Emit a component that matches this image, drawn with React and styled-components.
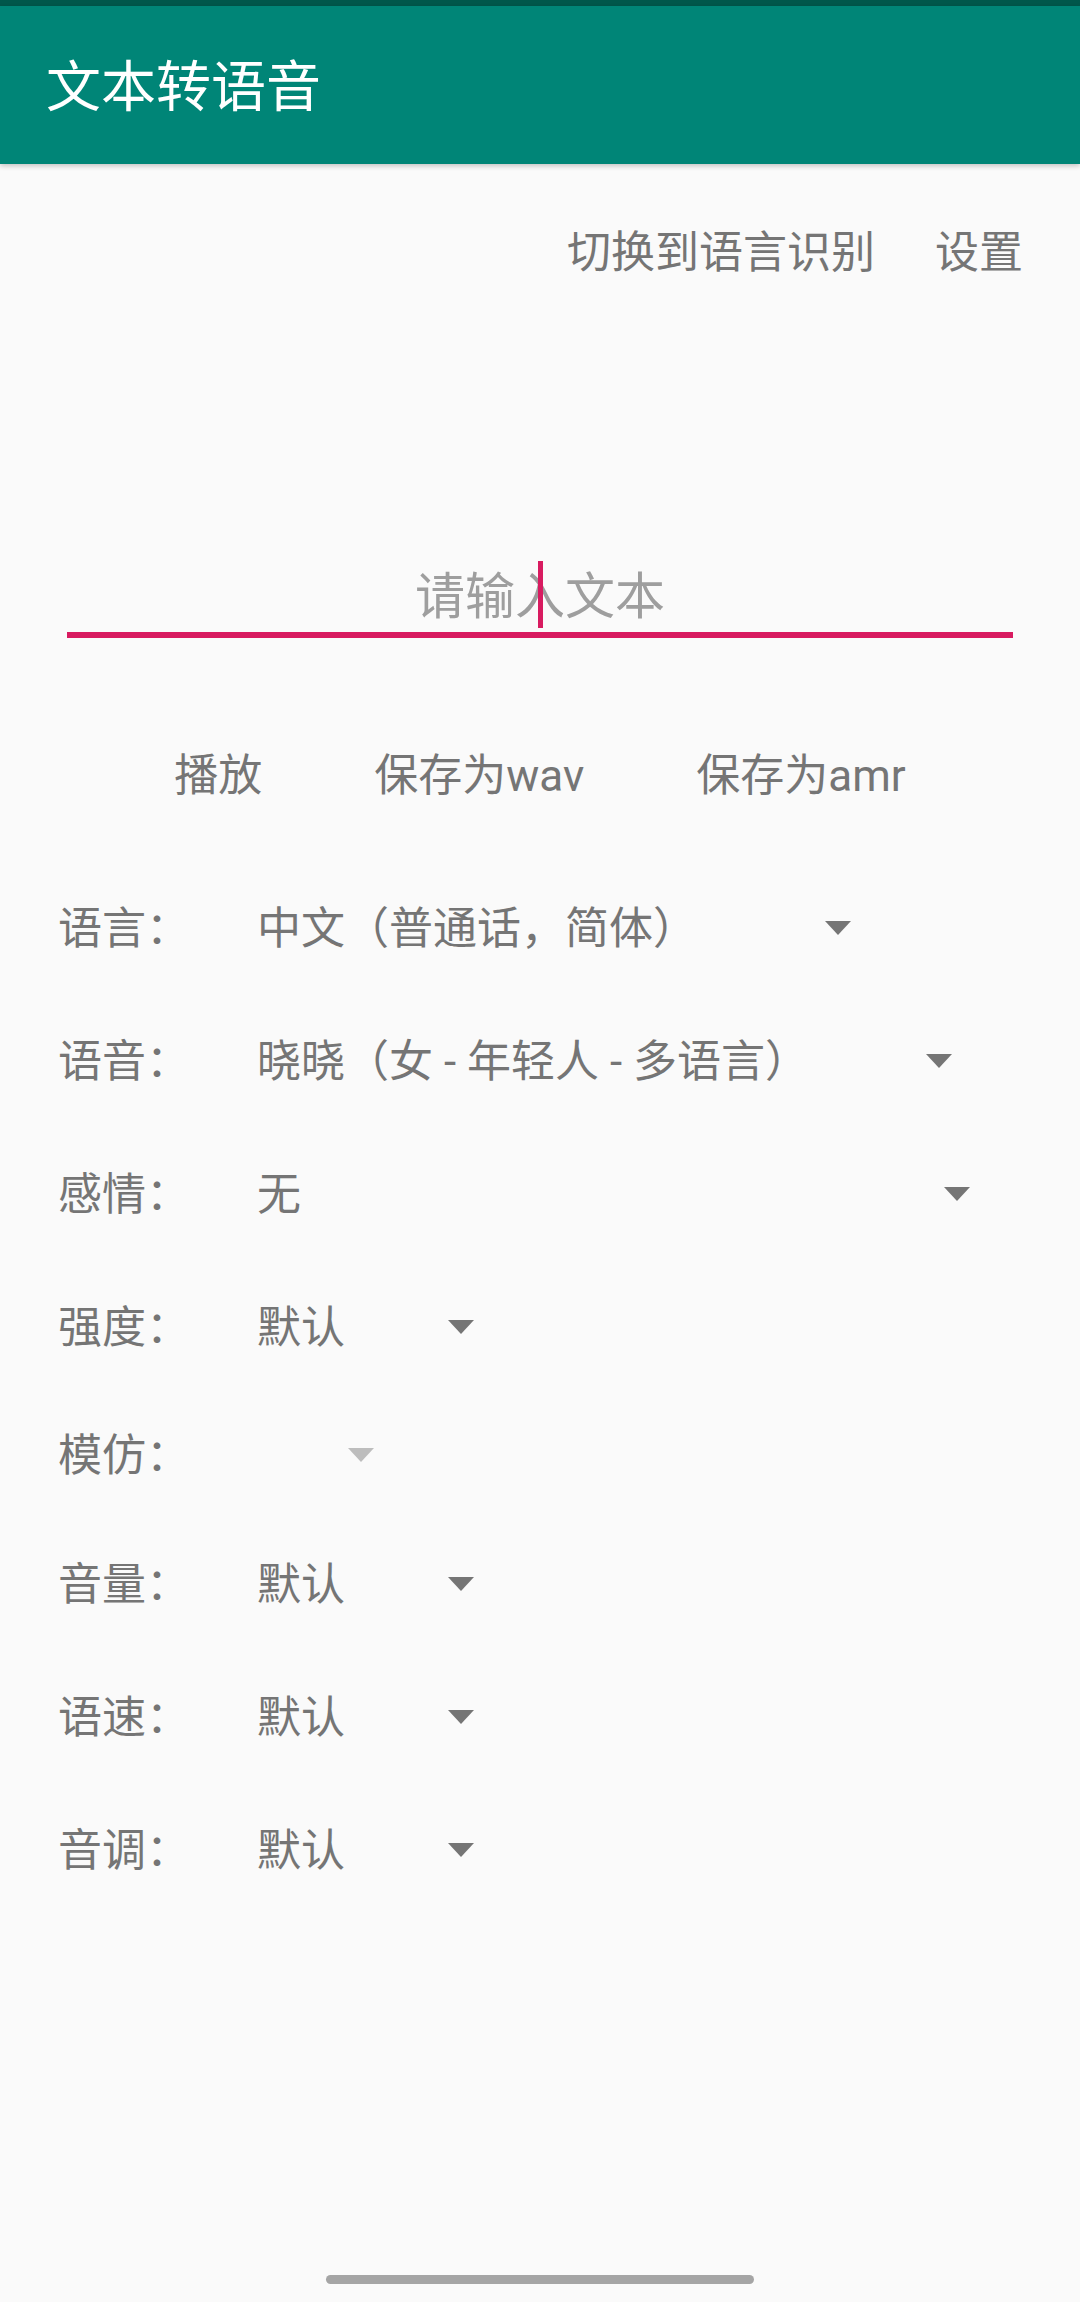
import styled, { createGlobalStyle } from "styled-components";

const GlobalStyle = createGlobalStyle`
    html, body {
        margin: 0;
        padding: 0;
        background: #fafafa;
    }
    body {
        font-family: Roboto, "Noto Sans CJK SC", sans-serif;
    }
`;

const Page = styled.div`
    min-height: 2302px;
    display: flex;
    flex-direction: column;
    background: #fafafa;
`;

const StatusBar = styled.div`
    height: 6px;
    background: #00574b;
`;

const Toolbar = styled.header`
    height: 158px;
    background: #008577;
    display: flex;
    align-items: center;
    padding-left: 46px;
    box-shadow: 0 2px 5px rgba(0, 0, 0, 0.22);
    position: relative;
    z-index: 1;
`;

const Title = styled.h1`
    margin: 0;
    padding-top: 3px;
    font-size: 55px;
    font-weight: 400;
    line-height: 80px;
    color: #ffffff;
`;

const TopActions = styled.div`
    margin-top: 23px;
    height: 132px;
    display: flex;
    justify-content: flex-end;
    align-items: center;
    gap: 60px;
    padding-right: 57px;
`;

const TextButton = styled.button`
    border: none;
    background: none;
    padding: 0;
    font-family: inherit;
    font-size: 44px;
    line-height: 60px;
    color: #757575;
`;

const Field = styled.div`
    position: relative;
    margin: 237px 67px 0;
    height: 76px;
    display: flex;
    align-items: center;
    justify-content: center;
    border-bottom: 6px solid #d81b60;
`;

const Hint = styled.span`
    padding-top: 5px;
    font-size: 50px;
    line-height: 70px;
    color: #9e9e9e;
`;

const Cursor = styled.span`
    position: absolute;
    left: calc(50% - 2px);
    top: 5px;
    width: 5px;
    height: 67px;
    background: #d81b60;
`;

const ButtonRow = styled.div`
    margin-top: 72px;
    height: 132px;
    display: flex;
    justify-content: center;
    align-items: center;
`;

const FlatButton = styled(TextButton)`
    padding: 0 56px;
    height: 132px;
`;

const Settings = styled.div`
    margin-top: 19px;
    display: flex;
    flex-direction: column;
`;

const Row = styled.div`
    height: ${(p) => (p.$short ? 124 : 133)}px;
    display: flex;
    align-items: center;
    padding-left: 58px;
`;

const Label = styled.span`
    width: 199px;
    padding-top: 2px;
    font-size: 44px;
    line-height: 60px;
    color: #757575;
`;

const Spinner = styled.div`
    width: ${(p) => p.$width}px;
    display: flex;
    align-items: center;
`;

const Value = styled.span`
    flex: 1;
    padding-top: 2px;
    font-size: 44px;
    line-height: 60px;
    color: #757575;
    white-space: nowrap;
`;

const Arrow = ({ disabled }) => (
    <svg width="26" height="14" viewBox="0 0 26 14">
        <path d="M0 0 L26 0 L13 14 Z" fill={disabled ? "#bdbdbd" : "#757575"} />
    </svg>
);

const Spacer = styled.div`
    flex: 1;
`;

const NavArea = styled.div`
    display: flex;
    justify-content: center;
    padding-bottom: 18px;
`;

const Handle = styled.div`
    width: 428px;
    height: 9px;
    border-radius: 5px;
    background: #a5a5a5;
`;

const rows = [
    { label: "语言：", value: "中文（普通话，简体）", width: 594 },
    { label: "语音：", value: "晓晓（女 - 年轻人 - 多语言）", width: 695 },
    { label: "感情：", value: "无", width: 713 },
    { label: "强度：", value: "默认", width: 217 },
    { label: "模仿：", value: "", width: 117, disabled: true },
    { label: "音量：", value: "默认", width: 217 },
    { label: "语速：", value: "默认", width: 217 },
    { label: "音调：", value: "默认", width: 217 },
];

const App = () => {
    return (
        <Page>
            <GlobalStyle />
            <StatusBar />
            <Toolbar>
                <Title>文本转语音</Title>
            </Toolbar>
            <TopActions>
                <TextButton>切换到语言识别</TextButton>
                <TextButton>设置</TextButton>
            </TopActions>
            <Field>
                <Hint>请输入文本</Hint>
                <Cursor />
            </Field>
            <ButtonRow>
                <FlatButton>播放</FlatButton>
                <FlatButton>保存为wav</FlatButton>
                <FlatButton>保存为amr</FlatButton>
            </ButtonRow>
            <Settings>
                {rows.map((r) => (
                    <Row key={r.label} $short={r.disabled}>
                        <Label>{r.label}</Label>
                        <Spinner $width={r.width}>
                            <Value>{r.value}</Value>
                            <Arrow disabled={r.disabled} />
                        </Spinner>
                    </Row>
                ))}
            </Settings>
            <Spacer />
            <NavArea>
                <Handle />
            </NavArea>
        </Page>
    );
};

export default App;
